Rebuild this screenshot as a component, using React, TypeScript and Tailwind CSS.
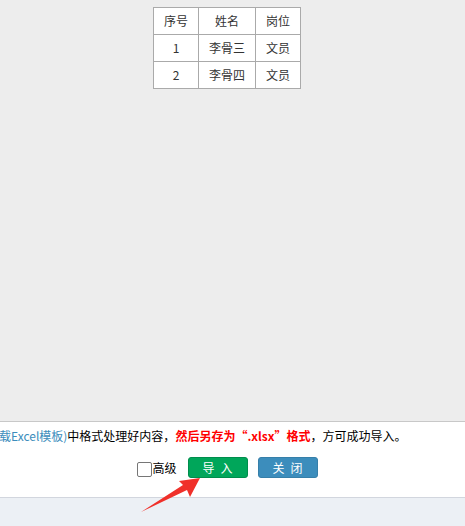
import React from "react";

const font = { fontFamily: '"Microsoft YaHei", "Noto Sans CJK SC", "Noto Sans", sans-serif' };

const rows = [
  ["1", "李骨三", "文员"],
  ["2", "李骨四", "文员"],
];

export default function App() {
  return (
    <div className="relative flex h-[526px] w-[465px] flex-col overflow-hidden text-[12px] text-[#333]" style={font}>
      <div className="flex-1 bg-[#ededed] pl-[153px] pt-[7px]">
        <table className="border-collapse bg-white text-center text-[12px] text-[#333]">
          <thead>
            <tr className="h-[27px]">
              <th className="w-[45px] border border-[#aaa] font-normal">序号</th>
              <th className="w-[57px] border border-[#aaa] font-normal">姓名</th>
              <th className="w-[45px] border border-[#aaa] font-normal">岗位</th>
            </tr>
          </thead>
          <tbody>
            {rows.map((r) => (
              <tr key={r[0]} className="h-[27px]">
                {r.map((c, i) => (
                  <td key={i} className="border border-[#aaa]">
                    {c}
                  </td>
                ))}
              </tr>
            ))}
          </tbody>
        </table>
      </div>

      <div className="h-[76px] border-t border-[#c8c8c8] bg-white">
        <div className="ml-[-1px] mt-[6px] whitespace-nowrap leading-[16px] text-black">
          <span className="text-[#3c8dbc]">载Excel模板)</span>
          中格式处理好内容，
          <span className="font-bold text-[#ff0000]">然后另存为“.xlsx”格式</span>
          ，方可成功导入。
        </div>
        <div className="mt-[13px] flex items-center justify-center pr-[10px]">
          <label className="mr-[11px] flex items-center text-black">
            <span className="mt-[3px] h-[15px] w-[15px] rounded-[2px] border border-[#767676] bg-white" />
            <span>高级</span>
          </label>
          <button className="mr-[10px] h-[21px] w-[60px] rounded-[3px] border border-[#008d4c] bg-[#00a65a] pl-[6px] tracking-[6px] text-white">
            导入
          </button>
          <button className="h-[21px] w-[60px] rounded-[3px] border border-[#367fa9] bg-[#3c8dbc] pl-[6px] tracking-[6px] text-white">
            关闭
          </button>
        </div>
      </div>

      <div className="h-[29px] border-t border-[#d2d6de] bg-[#ecf0f5]" />

      <svg className="absolute left-0 top-0" width="465" height="526" viewBox="0 0 465 526">
        <polygon points="141,512 183,485 179,481 200,478 190,497 187,490" fill="#f0302a" />
      </svg>
    </div>
  );
}
